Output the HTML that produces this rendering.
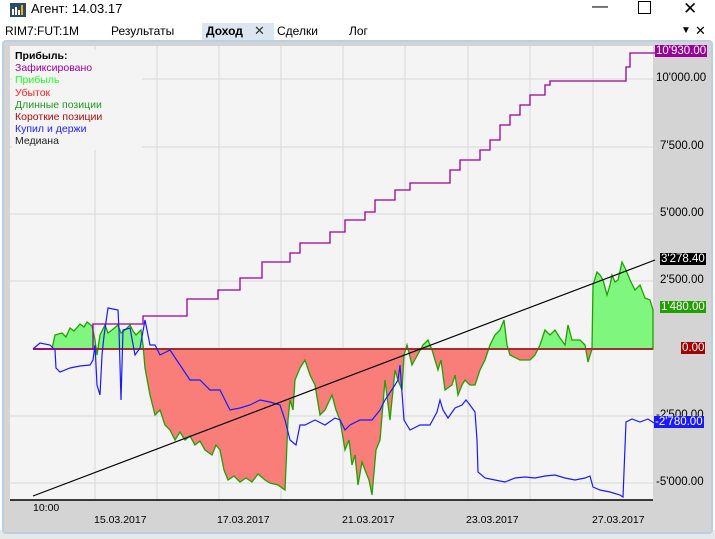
<!DOCTYPE html><html><head><meta charset="utf-8"><style>
body{margin:0;width:715px;height:539px;overflow:hidden;background:#fff;font-family:"Liberation Sans","DejaVu Sans",sans-serif;position:relative}
.a{position:absolute;white-space:nowrap}
</style></head><body>
<div class="a" style="left:10px;top:3px;width:16px;height:14px;background:#2e4a66"></div>
<div class="a" style="left:12px;top:9px;width:2px;height:6px;background:#fff"></div>
<div class="a" style="left:15px;top:7px;width:2px;height:8px;background:#fff"></div>
<div class="a" style="left:18px;top:10px;width:2px;height:5px;background:#fff"></div>
<div class="a" style="left:21px;top:5px;width:2px;height:10px;background:#f0b400"></div>
<div class="a" style="left:31px;top:1px;font-size:13px;color:#000">Агент: 14.03.17</div>
<div class="a" style="left:592px;top:-2px;font-size:16px">—</div>
<div class="a" style="left:638px;top:1px;width:11px;height:11px;border:1px solid #000"></div>
<div class="a" style="left:683px;top:-1px;font-size:17px">✕</div>
<div class="a" style="left:5px;top:24px;font-size:12px">RIM7:FUT:1M</div>
<div class="a" style="left:111px;top:24px;font-size:12px">Результаты</div>
<div class="a" style="left:202px;top:23px;width:72px;height:18px;background:#dce6f1"></div>
<div class="a" style="left:206px;top:24px;font-size:12px;font-weight:bold">Доход</div>
<div class="a" style="left:254px;top:23px;font-size:13px;color:#333">✕</div>
<div class="a" style="left:277px;top:24px;font-size:12px">Сделки</div>
<div class="a" style="left:349px;top:24px;font-size:12px">Лог</div>
<div class="a" style="left:681px;top:25px;font-size:10px">▼</div>
<div class="a" style="left:695px;top:23px;font-size:13px">✕</div>
<div class="a" style="left:0;top:530px;width:715px;height:9px;background:#e8e8e8"></div>
<div class="a" style="left:2px;top:40px;width:707px;height:490px;border:2px solid #b9cfe6;border-radius:4px;background:#d4d4d4"></div>
<svg class="a" style="left:0;top:0" width="715" height="539">
<rect x="10" y="46" width="643" height="454" fill="#f4f4f4"/>
<g stroke="#d8d8d8" stroke-width="1">
<path d="M95 46V500M157 46V500M219 46V500M281 46V500M343 46V500M405 46V500M468 46V500M530 46V500M593 46V500"/>
<path d="M10 79H653M10 147H653M10 214H653M10 281H653M10 416H653M10 483H653"/>
</g>
<defs><clipPath id="up"><rect x="0" y="0" width="715" height="349"/></clipPath><clipPath id="dn"><rect x="0" y="349" width="715" height="200"/></clipPath>
<polygon id="pp" points="33,349 52,349 55,335 62,333 66,337 70,328 74,331 80,324 84,327 87,322 92,326 95,340 97,355 100,335 105,325 108,333 112,330 118,325 121,333 125,330 130,325 133,331 136,335 141,330 143,345 145,368 150,395 155,415 160,410 165,425 170,430 175,440 180,432 185,440 190,436 195,445 200,441 205,450 212,455 216,445 220,450 224,470 228,480 234,476 240,482 246,478 252,482 258,474 265,480 270,483 278,485 285,490 288,420 290,400 293,410 295,380 300,368 305,360 310,375 315,385 320,415 325,410 332,395 336,410 340,420 345,450 349,440 352,465 355,455 358,485 362,462 365,470 369,480 372,495 376,450 380,440 385,380 390,420 395,370 398,380 402,390 404,355 407,345 412,365 418,354 423,345 428,340 432,350 438,370 441,360 445,390 452,385 455,375 458,395 462,385 465,380 470,385 475,385 480,370 485,360 490,345 495,335 500,330 504,320 507,345 510,355 520,360 530,360 535,355 540,345 545,330 550,335 555,330 560,338 565,345 568,325 572,340 580,340 585,345 588,362 592,349 593,285 597,272 600,275 603,280 607,295 610,285 612,275 615,282 618,280 622,262 626,270 630,280 635,290 640,285 645,298 650,300 653,310 653,349"/>
</defs>
<use href="#pp" clip-path="url(#up)" fill="#7ff77f"/>
<use href="#pp" clip-path="url(#dn)" fill="#f97e7a"/>
<use href="#pp" fill="none" stroke="#22a000" stroke-width="1.3"/>
<line x1="33" y1="349" x2="653" y2="349" stroke="#a03030" stroke-width="2"/>
<polyline fill="none" stroke="#1a1aff" stroke-width="1.2" points="33,349 40,343 50,345 55,350 56,368 60,372 70,368 80,366 90,365 93,360 95,345 97,385 100,395 102,355 104,336 108,308 118,310 119,330 121,400 123,330 130,328 135,355 140,348 145,320 150,345 155,345 160,355 170,350 180,365 190,380 200,380 210,390 220,390 230,410 240,408 250,405 260,400 270,402 280,405 285,420 290,440 296,445 300,425 305,425 315,420 325,425 335,418 340,420 345,430 350,425 360,420 372,420 380,410 385,400 395,385 398,380 400,365 404,420 410,430 420,425 430,425 437,412 440,400 443,410 448,418 455,408 462,405 466,400 470,405 475,412 477,440 478,472 485,478 495,480 505,482 515,478 525,477 535,478 545,476 555,475 565,478 575,480 585,478 590,476 593,487 600,490 610,492 620,495 623,497 626,422 632,419 640,422 648,419 654,423"/>
<polyline fill="none" stroke="#990099" stroke-width="1.3" points="34,349 93,349 93,324 143,324 143,316 187,316 187,299 218,299 218,290 240,290 240,278 262,278 262,262 290,262 290,253 300,253 300,243 330,243 330,232 345,232 345,220 365,220 365,212 375,212 375,200 395,200 395,190 410,190 410,183 450,183 450,170 460,170 460,160 480,160 480,150 490,150 490,140 500,140 500,125 510,125 510,115 520,115 520,105 530,105 530,95 545,95 545,85 550,85 550,81 626,81 626,67 630,67 630,53 655,53"/>
<line x1="33" y1="496" x2="655" y2="260" stroke="#000" stroke-width="1.2"/>
<line x1="10" y1="500" x2="653" y2="500" stroke="#000" stroke-width="1.5"/>
</svg>
<div class="a" style="left:12px;top:50px;width:130px;height:100px;background:#f4f4f4;font-size:10.5px;line-height:12.2px">
<div style="font-weight:bold;padding-left:3px">Прибыль:</div>
<div style="color:#990099;padding-left:3px">Зафиксировано</div>
<div style="color:#22ff22;padding-left:3px">Прибыль</div>
<div style="color:#ff2020;padding-left:3px">Убыток</div>
<div style="color:#229922;padding-left:3px">Длинные позиции</div>
<div style="color:#a01010;padding-left:3px">Короткие позиции</div>
<div style="color:#2222ff;padding-left:3px">Купил и держи</div>
<div style="color:#222;padding-left:3px">Медиана</div>
</div>
<div style="font-size:11.5px">
<div class="a" style="left:655px;top:45px;background:#990099;color:#fff;padding:0 1px">10'930.00</div>
<div class="a" style="left:656px;top:72px">10'000.00</div>
<div class="a" style="left:660px;top:140px">7'500.00</div>
<div class="a" style="left:660px;top:207px">5'000.00</div>
<div class="a" style="left:660px;top:253px;background:#000;color:#fff;padding:0 1px">3'278.40</div>
<div class="a" style="left:660px;top:274px">2'500.00</div>
<div class="a" style="left:660px;top:301px;background:#22a000;color:#fff;padding:0 1px">1'480.00</div>
<div class="a" style="left:681px;top:342px;background:#a00000;color:#fff;padding:0 1px">0.00</div>
<div class="a" style="left:656px;top:409px">-2'500.00</div>
<div class="a" style="left:654px;top:416px;background:#1a1aff;color:#fff;padding:0 1px">-2'780.00</div>
<div class="a" style="left:656px;top:476px">-5'000.00</div>
</div>
<div style="font-size:10.5px">
<div class="a" style="left:33px;top:502px">10:00</div>
<div class="a" style="left:94px;top:514px">15.03.2017</div>
<div class="a" style="left:217px;top:514px">17.03.2017</div>
<div class="a" style="left:342px;top:514px">21.03.2017</div>
<div class="a" style="left:466px;top:514px">23.03.2017</div>
<div class="a" style="left:592px;top:514px">27.03.2017</div>
</div>
</body></html>
